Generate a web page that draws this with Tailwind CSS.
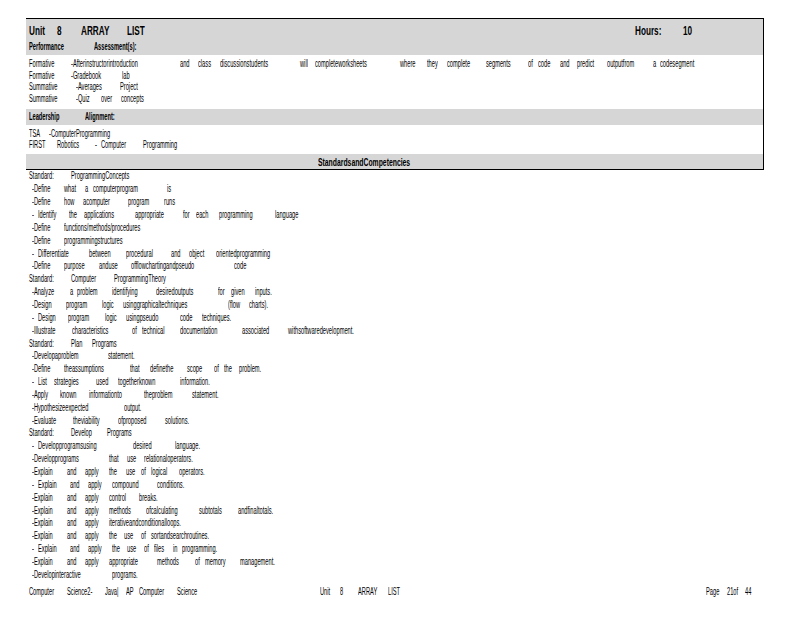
<!DOCTYPE html>
<html><head><meta charset="utf-8"><script src="https://cdn.jsdelivr.net/npm/@tailwindcss/browser@4"></script></head>
<body class="bg-white">
<div class="w-[800px] h-[618px] overflow-hidden bg-white text-black pt-[18px] font-['Liberation_Sans',sans-serif] text-[10px] whitespace-nowrap leading-none [&_span]:shrink-0 [&_span]:block [&_span]:origin-left [&_span]:scale-x-[0.57]">

<div class="ml-[26px] w-[738px] h-[152px] border-t border-b border-r border-black flex flex-col">
  <div class="bg-[#d6d6d6] h-[36px] pl-[3px] font-bold">
    <div class="flex items-center h-[22px] text-[13px] [&_span]:scale-x-[0.63]!"><span class="w-[28px]">Unit</span><span class="w-[24px]">8</span><span class="w-[46px]">ARRAY</span><span class="w-[508px]">LIST</span><span class="w-[48px]">Hours:</span><span>10</span></div>
    <div class="flex items-center h-[12px] text-[10px] [&_span]:scale-x-[0.57]!"><span class="w-[65px]">Performance</span><span>Assessment(s):</span></div>
  </div>
  <div class="h-[54px] pl-[3px] pt-[3px]">
    <div class="flex items-center h-[12px]"><span class="w-[42px]">Formative</span><span class="w-[109px]">-Afterinstructorintroduction</span><span class="w-[18px]">and</span><span class="w-[22px]">class</span><span class="w-[80px]">discussionstudents</span><span class="w-[15px]">will</span><span class="w-[85px]">completeworksheets</span><span class="w-[27px]">where</span><span class="w-[20px]">they</span><span class="w-[39px]">complete</span><span class="w-[42px]">segments</span><span class="w-[10px]">of</span><span class="w-[22px]">code</span><span class="w-[17px]">and</span><span class="w-[30px]">predict</span><span class="w-[46px]">outputfrom</span><span class="w-[7px]">a</span><span>codesegment</span></div>
    <div class="flex items-center h-[11px]"><span class="w-[42px]">Formative</span><span class="w-[51px]">-Gradebook</span><span>lab</span></div>
    <div class="flex items-center h-[12px]"><span class="w-[47px]">Summative</span><span class="w-[44px]">-Averages</span><span>Project</span></div>
    <div class="flex items-center h-[12px]"><span class="w-[47px]">Summative</span><span class="w-[25px]">-Quiz</span><span class="w-[20px]">over</span><span>concepts</span></div>
  </div>
  <div class="bg-[#d6d6d6] h-[16px] pl-[3px] flex items-center font-bold text-[10px] [&_span]:scale-x-[0.57]!"><span class="w-[56px]">Leadership</span><span>Alignment:</span></div>
  <div class="h-[29px] pl-[3px] pt-[3px]">
    <div class="flex items-center h-[11px]"><span class="w-[20px]">TSA</span><span>-ComputerProgramming</span></div>
    <div class="flex items-center h-[11px]"><span class="w-[28px]">FIRST</span><span class="w-[38px]">Robotics</span><span class="w-[6px]">-</span><span class="w-[42px]">Computer</span><span>Programming</span></div>
  </div>
  <div class="bg-[#d6d6d6] h-[15px] pl-[292px] pt-px flex items-center font-bold text-[10.5px] [&_span]:scale-x-[0.65]!"><span>StandardsandCompetencies</span></div>
</div>

<div class="pl-[29px] mt-0 [&>div]:flex [&>div]:items-center [&>div]:h-[13px] [&>.d]:pl-[3px]">
  <div class="!h-[12px]"><span class="w-[42px]">Standard:</span><span>ProgrammingConcepts</span></div>
  <div class="d"><span class="w-[32px]">-Define</span><span class="w-[21px]">what</span><span class="w-[8px]">a</span><span class="w-[74px]">computerprogram</span><span>is</span></div>
  <div class="d"><span class="w-[32px]">-Define</span><span class="w-[19px]">how</span><span class="w-[45px]">acomputer</span><span class="w-[36px]">program</span><span>runs</span></div>
  <div class="d"><span class="w-[6px]">-</span><span class="w-[31px]">Identify</span><span class="w-[15px]">the</span><span class="w-[51px]">applications</span><span class="w-[48px]">appropriate</span><span class="w-[13px]">for</span><span class="w-[23px]">each</span><span class="w-[56px]">programming</span><span>language</span></div>
  <div class="d"><span class="w-[32px]">-Define</span><span>functions/methods/procedures</span></div>
  <div class="d"><span class="w-[32px]">-Define</span><span>programmingstructures</span></div>
  <div class="d"><span class="w-[6px]">-</span><span class="w-[51px]">Differentiate</span><span class="w-[37px]">between</span><span class="w-[45px]">procedural</span><span class="w-[18px]">and</span><span class="w-[27px]">object</span><span>orientedprogramming</span></div>
  <div class="d !h-[12px]"><span class="w-[32px]">-Define</span><span class="w-[35px]">purpose</span><span class="w-[32px]">anduse</span><span class="w-[103px]">offlowchartingandpseudo</span><span>code</span></div>
  <div><span class="w-[42px]">Standard:</span><span class="w-[43px]">Computer</span><span>ProgrammingTheory</span></div>
  <div class="d"><span class="w-[38px]">-Analyze</span><span class="w-[7px]">a</span><span class="w-[35px]">problem</span><span class="w-[44px]">identifying</span><span class="w-[62px]">desiredoutputs</span><span class="w-[13px]">for</span><span class="w-[24px]">given</span><span>inputs.</span></div>
  <div class="d"><span class="w-[34px]">-Design</span><span class="w-[36px]">program</span><span class="w-[21px]">logic</span><span class="w-[105px]">usinggraphicaltechniques</span><span class="w-[21px]">(flow</span><span>charts).</span></div>
  <div class="d"><span class="w-[6px]">-</span><span class="w-[30px]">Design</span><span class="w-[37px]">program</span><span class="w-[21px]">logic</span><span class="w-[54px]">usingpseudo</span><span class="w-[22px]">code</span><span>techniques.</span></div>
  <div class="d"><span class="w-[40px]">-Illustrate</span><span class="w-[60px]">characteristics</span><span class="w-[10px]">of</span><span class="w-[38px]">technical</span><span class="w-[62px]">documentation</span><span class="w-[46px]">associated</span><span>withsoftwaredevelopment.</span></div>
  <div><span class="w-[42px]">Standard:</span><span class="w-[21px]">Plan</span><span>Programs</span></div>
  <div class="d !h-[12px]"><span class="w-[76px]">-Developaproblem</span><span>statement.</span></div>
  <div class="d"><span class="w-[32px]">-Define</span><span class="w-[66px]">theassumptions</span><span class="w-[20px]">that</span><span class="w-[37px]">definethe</span><span class="w-[27px]">scope</span><span class="w-[10px]">of</span><span class="w-[15px]">the</span><span>problem.</span></div>
  <div class="d"><span class="w-[6px]">-</span><span class="w-[16px]">List</span><span class="w-[42px]">strategies</span><span class="w-[22px]">used</span><span class="w-[62px]">togetherknown</span><span>information.</span></div>
  <div class="d"><span class="w-[28px]">-Apply</span><span class="w-[29px]">known</span><span class="w-[55px]">informationto</span><span class="w-[48px]">theproblem</span><span>statement.</span></div>
  <div class="d"><span class="w-[92px]">-Hypothesizeexpected</span><span>output.</span></div>
  <div class="d"><span class="w-[41px]">-Evaluate</span><span class="w-[45px]">theviability</span><span class="w-[47px]">ofproposed</span><span>solutions.</span></div>
  <div class="!h-[12px]"><span class="w-[42px]">Standard:</span><span class="w-[36px]">Develop</span><span>Programs</span></div>
  <div class="d"><span class="w-[6px]">-</span><span class="w-[95px]">Developprogramsusing</span><span class="w-[42px]">desired</span><span>language.</span></div>
  <div class="d"><span class="w-[77px]">-Developprograms</span><span class="w-[18px]">that</span><span class="w-[17px]">use</span><span>relationaloperators.</span></div>
  <div class="d"><span class="w-[35px]">-Explain</span><span class="w-[18px]">and</span><span class="w-[24px]">apply</span><span class="w-[17px]">the</span><span class="w-[15px]">use</span><span class="w-[10px]">of</span><span class="w-[28px]">logical</span><span>operators.</span></div>
  <div class="d"><span class="w-[6px]">-</span><span class="w-[32px]">Explain</span><span class="w-[18px]">and</span><span class="w-[24px]">apply</span><span class="w-[45px]">compound</span><span>conditions.</span></div>
  <div class="d"><span class="w-[35px]">-Explain</span><span class="w-[18px]">and</span><span class="w-[24px]">apply</span><span class="w-[30px]">control</span><span>breaks.</span></div>
  <div class="d"><span class="w-[35px]">-Explain</span><span class="w-[18px]">and</span><span class="w-[24px]">apply</span><span class="w-[37px]">methods</span><span class="w-[53px]">ofcalculating</span><span class="w-[39px]">subtotals</span><span>andfinaltotals.</span></div>
  <div class="d !h-[12px]"><span class="w-[35px]">-Explain</span><span class="w-[18px]">and</span><span class="w-[24px]">apply</span><span>iterativeandconditionalloops.</span></div>
  <div class="d"><span class="w-[35px]">-Explain</span><span class="w-[18px]">and</span><span class="w-[24px]">apply</span><span class="w-[15px]">the</span><span class="w-[17px]">use</span><span class="w-[10px]">of</span><span>sortandsearchroutines.</span></div>
  <div class="d"><span class="w-[6px]">-</span><span class="w-[32px]">Explain</span><span class="w-[18px]">and</span><span class="w-[24px]">apply</span><span class="w-[15px]">the</span><span class="w-[17px]">use</span><span class="w-[10px]">of</span><span class="w-[19px]">files</span><span class="w-[9px]">in</span><span>programming.</span></div>
  <div class="d"><span class="w-[35px]">-Explain</span><span class="w-[18px]">and</span><span class="w-[24px]">apply</span><span class="w-[48px]">appropriate</span><span class="w-[38px]">methods</span><span class="w-[10px]">of</span><span class="w-[35px]">memory</span><span>management.</span></div>
  <div class="d"><span class="w-[80px]">-Developinteractive</span><span>programs.</span></div>
</div>

<div class="flex items-center h-[12px] mt-[5px] pl-[29px]"><span class="w-[38px]">Computer</span><span class="w-[38px]">Science2-</span><span class="w-[21px]">Java|</span><span class="w-[13px]">AP</span><span class="w-[38px]">Computer</span><span class="w-[143px]">Science</span><span class="w-[20px]">Unit</span><span class="w-[18px]">8</span><span class="w-[30px]">ARRAY</span><span class="w-[318px]">LIST</span><span class="w-[21px]">Page</span><span class="w-[18px]">21of</span><span>44</span></div>
</div>
</body></html>
